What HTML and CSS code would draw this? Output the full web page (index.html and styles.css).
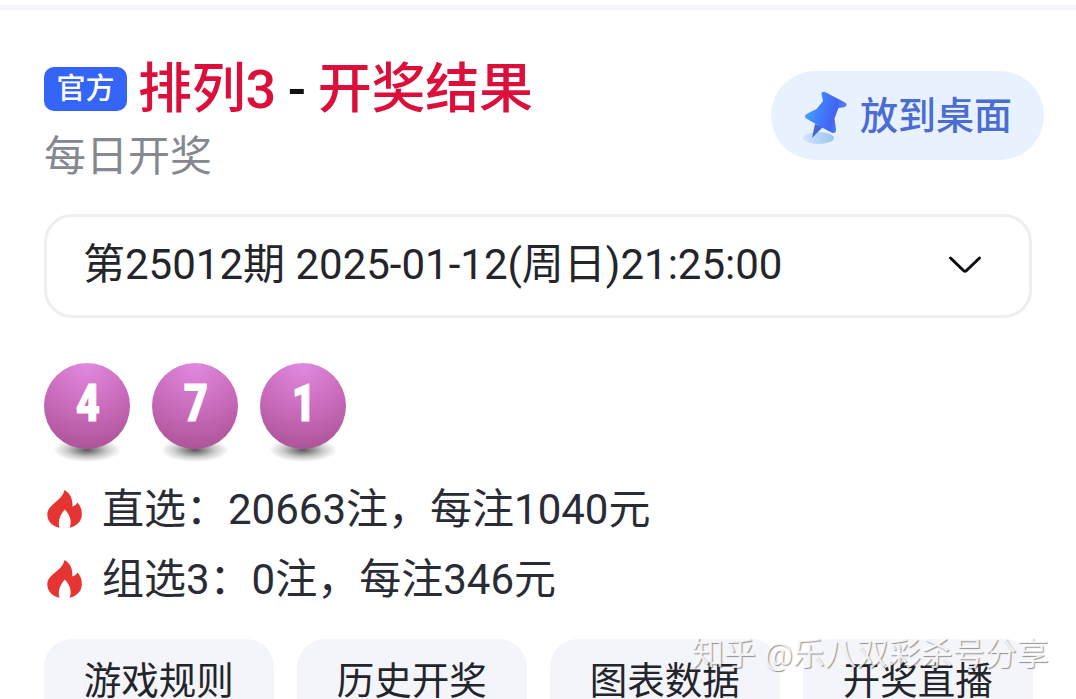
FILE: index.html
```html
<!DOCTYPE html>
<html lang="zh-CN">
<head>
    <meta charset="UTF-8">
    <meta name="viewport" content="width=device-width, initial-scale=1.0">
    <title>排列3 - 开奖结果</title>
    <link rel="stylesheet" href="styles.css">
</head>
<body>
    <svg class="defs" width="0" height="0">
        <symbol id="fire" viewBox="0 0 36 38">
            <path d="M17.500 0C23 3 26 9 25.300 16.500C28 15.500 29.500 14.500 30.300 12.500C33.500 16 35 19 34.800 25C34.600 31 30 36 22.500 37.800C25.500 31 22.500 24.500 17.800 19.500C13 25 10.500 31 12.500 37.800C5 36 .300 31 .300 24.500C.300 14 15.500 11 17.500 0Z" fill="#e63432"/>
        </symbol>
    </svg>
    <div class="top-line"></div>
    <div class="card">
        <div class="header">
            <div class="heading">
                <div class="title-row">
                    <span class="badge">官方</span>
                    <h1 class="title"><em>排列3</em> - <em>开奖结果</em></h1>
                </div>
                <p class="subtitle">每日开奖</p>
            </div>
            <button class="desktop-btn">
                <svg class="pin" width="44" height="54" viewBox="0 0 44 54">
                    <defs>
                        <linearGradient id="pin-fill" x1="0" y1="0.3" x2="1" y2="0.6">
                            <stop offset="0" stop-color="#45aaff"/>
                            <stop offset="0.4" stop-color="#427dfa"/>
                            <stop offset="0.7" stop-color="#4264f3"/>
                            <stop offset="1" stop-color="#658ff0"/>
                        </linearGradient>
                        <linearGradient id="pin-base" x1="0" y1="0" x2="1" y2="0">
                            <stop offset="0" stop-color="#d3e6fb"/>
                            <stop offset="1" stop-color="#9bc4f4"/>
                        </linearGradient>
                    </defs>
                    <ellipse cx="15.500" cy="47" rx="15.500" ry="6" fill="url(#pin-base)"/>
                    <path d="M9 47L12 33L20 36Z" fill="#4668d5"/>
                    <path d="M18.500 3.500C18 1 20.500 0 23 1.500L42 11.500C45 13.300 43.500 16 41 16.200L35.500 17L31.500 27.500L33 38C33.500 41.500 31.500 43 28.500 41.500L19 36.500L4 28C1 26.500 1.500 24 4.500 22.500L13.500 18L20 10Z" fill="url(#pin-fill)"/>
                </svg>
                <span>放到桌面</span>
            </button>
        </div>

        <div class="issue-select">
            <span class="issue">第25012期 2025-01-12(周日)21:25:00</span>
            <svg width="34" height="20" viewBox="0 0 34 20">
                <path d="M2.500 3L15.500 15.500Q17 17 18.500 15.500L31.500 3" fill="none" stroke="#0d0d15" stroke-width="3" stroke-linecap="round"/>
            </svg>
        </div>

        <div class="balls">
            <div class="ball"><span>4</span></div>
            <div class="ball"><span>7</span></div>
            <div class="ball"><span>1</span></div>
        </div>

        <ul class="prizes">
            <li><svg class="fire"><use href="#fire"/></svg><span>直选：20663注，每注1040元</span></li>
            <li><svg class="fire"><use href="#fire"/></svg><span>组选3：0注，每注346元</span></li>
        </ul>

        <div class="links">
            <a class="link">游戏规则</a>
            <a class="link">历史开奖</a>
            <a class="link">图表数据</a>
            <a class="link">开奖直播</a>
        </div>
    </div>
    <div class="watermark">知乎 @乐八双彩杀号分享</div>
</body>
</html>
```

FILE: styles.css
```css
* {
    box-sizing: border-box;
}
body {
    margin: 0;
    height: 699px;
    position: relative;
    overflow: hidden;
    background-color: #fff;
    color: #23252b;
    font-family: Roboto, "Noto Sans CJK SC", sans-serif;
}
.defs {
    display: block;
}
.top-line {
    height: 5px;
    margin-top: 5px;
    background-color: #f4f4fb;
}
.card {
    padding: 50px 43px 0 44px;
}
.header {
    display: flex;
    justify-content: space-between;
    height: 154px;
}
.title-row {
    display: flex;
    align-items: center;
    height: 58px;
}
.badge {
    width: 83px;
    height: 44px;
    margin-right: 11px;
    border-radius: 10px;
    background-color: #3565f6;
    color: #fff;
    font-size: 29px;
    font-weight: 500;
    line-height: 44px;
    text-align: center;
}
.title {
    margin: 0;
    padding-top: 2px;
    color: #111;
    font-size: 54px;
    font-weight: 500;
    line-height: 56px;
    letter-spacing: -0.2px;
    word-spacing: -1.5px;
    white-space: pre;
}
.title em {
    color: #dc0f3b;
    font-style: normal;
}
.subtitle {
    margin: 14px 0 0;
    color: #85888f;
    font-size: 42px;
    line-height: 50px;
}
.desktop-btn {
    display: flex;
    align-items: center;
    width: 273px;
    height: 89px;
    margin: 11px -11px 0 0;
    padding: 0 0 0 32px;
    border: none;
    border-radius: 45px;
    background-color: #e7f2fe;
    color: #4b6cd3;
    font-family: inherit;
    font-size: 38px;
    font-weight: 500;
    line-height: 50px;
}
.pin {
    margin: 4px 13px 0 0;
}
.issue-select {
    display: flex;
    align-items: center;
    justify-content: space-between;
    width: 988px;
    height: 104px;
    padding: 0 47px 2px 36px;
    border: 3px solid #eee;
    border-radius: 28px;
    font-size: 42px;
}
.issue {
    line-height: 50px;
}
.balls {
    display: flex;
    gap: 22px;
    margin-top: 45px;
}
.ball {
    position: relative;
    width: 86px;
    height: 86px;
    padding-left: 2px;
    border-radius: 50%;
    background: radial-gradient(circle at 50% 0, #e18ae0 0, #c96bbb 50%, #a64e90 100%);
    color: #fff;
    font-size: 51px;
    font-weight: 900;
    line-height: 82px;
    text-align: center;
}
.ball::after {
    content: "";
    position: absolute;
    left: 9px;
    bottom: -13px;
    z-index: -1;
    width: 68px;
    height: 24px;
    background: radial-gradient(closest-side, rgba(0, 0, 0, 0.65), rgba(0, 0, 0, 0.2) 60%, rgba(0, 0, 0, 0));
}
.ball span {
    display: inline-block;
    transform: scaleX(0.82);
    -webkit-text-stroke: 1px #fff;
}
.prizes {
    margin: 26px 0 0;
    padding: 0;
    list-style: none;
    color: #2a2c35;
    font-size: 42px;
    line-height: 50px;
}
.prizes li {
    display: flex;
    align-items: center;
    height: 70px;
}
.fire {
    width: 36px;
    height: 38px;
    margin: 0 19px 2px 3px;
}
.links {
    display: flex;
    gap: 22.5px;
    margin: 24px 0 0 -0.5px;
}
.link {
    width: 230.5px;
    height: 86px;
    border-radius: 28px;
    background-color: #f4f5fa;
    font-size: 37.5px;
    line-height: 84px;
    text-align: center;
}
.watermark {
    position: absolute;
    left: 692px;
    top: 634px;
    color: rgba(255, 255, 255, 0.85);
    font-size: 32px;
    line-height: 40px;
    text-shadow: 1px 1px 1px rgba(0, 0, 0, 0.4);
    white-space: nowrap;
}
```
